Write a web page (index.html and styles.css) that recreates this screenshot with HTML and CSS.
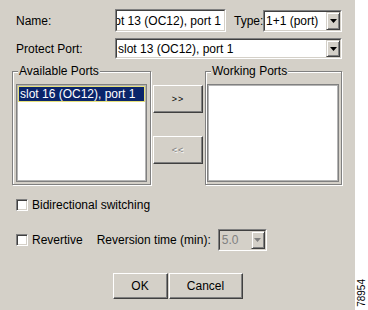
FILE: index.html
```html
<!DOCTYPE html>
<html lang="en">
<head>
  <meta charset="UTF-8" />
  <title>Create Protection Group</title>
  <link rel="stylesheet" href="styles.css">
</head>
<body>
  <div class="dialog">
    <div class="row row-name">
      <label class="lbl">Name:</label>
      <div class="sunken name-field">
        <div class="sunken-in field-in"><span>slot 13 (OC12), port 1</span></div>
      </div>
      <label class="lbl-type">Type:</label>
      <div class="sunken combo type-combo">
        <div class="sunken-in combo-in">
          <span class="combo-text">1+1 (port)</span>
          <span class="arrow"><svg width="7" height="4" viewBox="0 0 7 4"><polygon points="0,0 7,0 3.5,4" /></svg></span>
        </div>
      </div>
    </div>

    <div class="row row-protect">
      <label class="lbl">Protect Port:</label>
      <div class="sunken combo protect-combo">
        <div class="sunken-in combo-in">
          <span class="combo-text">slot 13 (OC12), port 1</span>
          <span class="arrow"><svg width="7" height="4" viewBox="0 0 7 4"><polygon points="0,0 7,0 3.5,4" /></svg></span>
        </div>
      </div>
    </div>

    <div class="ports">
      <fieldset class="group group-avail">
        <legend>Available Ports</legend>
        <div class="list list-avail">
          <div class="item selected">slot 16 (OC12), port 1</div>
        </div>
      </fieldset>
      <div class="move-buttons">
        <button class="btn btn-move">&gt;&gt;</button>
        <button class="btn btn-move" disabled>&lt;&lt;</button>
      </div>
      <fieldset class="group group-work">
        <legend>Working Ports</legend>
        <div class="list list-work"></div>
      </fieldset>
    </div>

    <div class="check-row check-bidir">
      <span class="checkbox"></span>
      <span>Bidirectional switching</span>
    </div>

    <div class="check-row check-rev">
      <span class="checkbox"></span>
      <span>Revertive</span>
      <span class="rev-label">Reversion time (min):</span>
      <div class="sunken combo rev-combo">
        <div class="sunken-in combo-in disabled">
          <span class="combo-text">5.0</span>
          <span class="arrow"><svg width="7" height="4" viewBox="0 0 7 4"><polygon points="0,0 7,0 3.5,4" /></svg></span>
        </div>
      </div>
    </div>

    <div class="actions">
      <button class="btn btn-ok">OK</button>
      <button class="btn btn-cancel">Cancel</button>
    </div>
  </div>

  <div class="side">
    <span class="fig-no">78954</span>
  </div>
</body>
</html>
```

FILE: styles.css
```css
body {
  margin: 0;
  display: flex;
  width: 368px;
  height: 310px;
  background: #fff;
  color: #000;
  font: 12px "Liberation Sans", Arial, sans-serif;
}
.dialog {
  width: 355px;
  height: 310px;
  box-sizing: border-box;
  padding-top: 9px;
  background: #d4d0c8;
}
.side {
  width: 13px;
  display: flex;
  align-items: flex-end;
  justify-content: center;
  padding-bottom: 3px;
  box-sizing: border-box;
}
.fig-no {
  writing-mode: vertical-rl;
  transform: rotate(180deg);
  font-size: 10px;
  line-height: 10px;
}

/* top rows */
.row {
  display: flex;
  align-items: center;
  margin-left: 16px;
}
.row-name {
  height: 23px;
}
.row-protect {
  height: 21px;
  margin-top: 6px;
}
.lbl {
  width: 99px;
}
.lbl-type {
  width: 29px;
  margin-left: 8px;
}

/* sunken boxes (fields, combos) */
.sunken {
  box-sizing: border-box;
  border: 1px solid;
  border-color: #808080 #fff #fff #808080;
}
.sunken-in {
  box-sizing: border-box;
  height: 100%;
  border: 1px solid;
  border-color: #404040 #d4d0c8 #d4d0c8 #404040;
  background: #fff;
  overflow: hidden;
  white-space: nowrap;
}
.name-field {
  width: 111px;
  height: 23px;
}
.field-in {
  display: flex;
  justify-content: flex-end;
  align-items: center;
  padding-right: 3px;
}
.combo-in {
  display: flex;
  align-items: stretch;
}
.combo-text {
  flex: 1;
  display: flex;
  align-items: center;
  padding-left: 1px;
  overflow: hidden;
}
.arrow {
  width: 14px;
  box-sizing: border-box;
  display: flex;
  align-items: center;
  justify-content: center;
  background: #d4d0c8;
  border: 1px solid;
  border-color: #d4d0c8 #404040 #404040 #d4d0c8;
  box-shadow: inset 1px 1px #fff, inset -1px -1px #808080;
}
.arrow svg {
  fill: #000;
}
.type-combo {
  width: 79px;
  height: 22px;
}
.protect-combo {
  width: 227px;
  height: 21px;
}
.combo-in.disabled {
  background: #d4d0c8;
  color: #808080;
}
.combo-in.disabled .combo-text {
  padding-left: 2px;
}
.combo-in.disabled .arrow svg {
  fill: #808080;
}

/* port lists */
.ports {
  display: flex;
  align-items: flex-start;
  margin: 5px 0 0 12px;
}
.group {
  margin: 0;
  min-width: 0;
  padding: 6px 3px 2px;
  border: 1px solid #808080;
  box-shadow: inset 1px 1px #fff, 1px 1px #fff;
}
.group legend {
  padding: 0 1px;
  margin-left: 2px;
  line-height: 14px;
  background: #d4d0c8;
}
.group-work {
  padding: 6px 2px 2px 1px;
}
.group-work legend {
  margin-left: 4px;
}
.list {
  height: 98px;
  box-sizing: border-box;
  background: #fff;
  border: 1px solid #808080;
  box-shadow: inset 0 0 0 1px #b4b4b4;
  padding: 1px;
}
.list-avail {
  width: 131px;
}
.list-work {
  width: 132px;
}
.item {
  height: 16px;
  line-height: 14px;
  box-sizing: border-box;
  padding-left: 1px;
  white-space: nowrap;
}
.item.selected {
  background: #0a246a;
  color: #fff;
  border: 1px solid #e6e07a;
}

/* buttons */
.btn {
  font: inherit;
  color: #000;
  background: #d4d0c8;
  padding: 0;
  border: 1px solid;
  border-color: #fff #404040 #404040 #fff;
  box-shadow: inset -1px -1px #808080;
}
.btn:disabled {
  color: #808080;
  text-shadow: 1px 1px #fff;
}
.move-buttons {
  display: flex;
  flex-direction: column;
  gap: 23px;
  margin: 21px 2px 0;
}
.btn-move {
  width: 50px;
  height: 28px;
  font-size: 9px;
  letter-spacing: 1px;
}

/* check rows */
.check-row {
  display: flex;
  align-items: center;
  margin-left: 16px;
}
.check-bidir {
  height: 16px;
  margin-top: 12px;
}
.check-rev {
  height: 22px;
  margin-top: 16px;
}
.checkbox {
  width: 12px;
  height: 12px;
  box-sizing: border-box;
  margin-right: 4px;
  background: #fff;
  border: 1px solid;
  border-color: #808080 #fff #fff #808080;
  box-shadow: inset 1px 1px #404040, inset -1px -1px #d4d0c8;
}
.rev-label {
  margin-left: 14px;
  margin-right: 7px;
}
.rev-combo {
  width: 49px;
  height: 22px;
}

.actions {
  display: flex;
  justify-content: center;
  gap: 1px;
  margin-top: 22px;
}
.btn-ok {
  width: 55px;
  height: 26px;
}
.btn-cancel {
  width: 74px;
  height: 26px;
}
```
